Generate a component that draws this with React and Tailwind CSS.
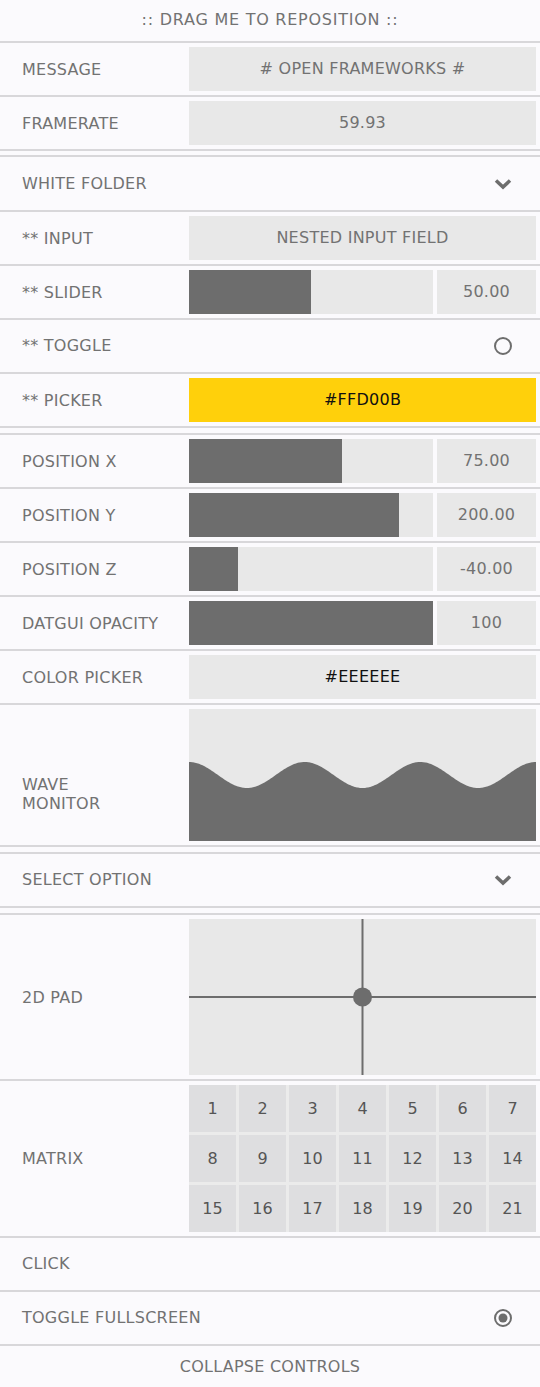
import React from "react";

const FONT = { fontFamily: '"DejaVu Sans", Verdana, sans-serif' };

const Row = ({ label, children, tall, labelClass = "" }) => (
  <div className="flex items-center border-b-2 border-[#d8d7da] py-1 pr-1">
    <div
      className={`w-[189px] shrink-0 pl-[22px] text-[16px] leading-[19px] tracking-[0.25px] text-[#727272] ${labelClass}`}
    >
      {label}
    </div>
    <div className={`flex-1 ${tall ? "" : "h-[44px]"} flex`}>{children}</div>
  </div>
);

const Box = ({ children, className = "" }) => (
  <div
    className={`flex-1 h-full flex items-center justify-center bg-[#e8e8e8] text-[16px] tracking-[0.25px] text-[#727272] ${className}`}
  >
    {children}
  </div>
);

const Slider = ({ fill, value }) => (
  <div className="flex flex-1 h-full gap-1">
    <div className="w-[244px] h-full bg-[#e8e8e8] flex">
      <div className="h-full bg-[#6d6d6d]" style={{ width: fill }} />
    </div>
    <Box>{value}</Box>
  </div>
);

const Spacer = ({ h = "h-[7px]" }) => (
  <div className={`${h} border-b-2 border-[#d8d7da]`} />
);

const Chevron = () => (
  <svg width="18" height="12" viewBox="0 0 18 12" className="mr-[28px]">
    <path d="M2 2.5 L9 9 L16 2.5" fill="none" stroke="#6d6d6d" strokeWidth="3.5" />
  </svg>
);

const Radio = ({ on }) => (
  <svg width="20" height="20" viewBox="0 0 20 20" className="mr-[27px]">
    <circle cx="10" cy="10" r="8" fill="none" stroke="#6d6d6d" strokeWidth="2" />
    {on && <circle cx="10" cy="10" r="4.5" fill="#6d6d6d" />}
  </svg>
);

const LineRow = ({ label, right }) => (
  <div className="flex h-[54px] items-center justify-between border-b-2 border-[#d8d7da] pl-[22px]">
    <span className="text-[16px] tracking-[0.25px] text-[#727272]">{label}</span>
    {right}
  </div>
);

const Wave = () => {
  const w = 347;
  const h = 132;
  let d = `M0 ${h} `;
  for (let x = 0; x <= w; x += 1) {
    const y = 66 - 13 * Math.cos((2 * Math.PI * x) / 115.67);
    d += `L${x} ${y.toFixed(2)} `;
  }
  d += `L${w} ${h} Z`;
  return (
    <svg width={w} height={h} viewBox={`0 0 ${w} ${h}`} className="block">
      <rect width={w} height={h} fill="#e8e8e8" />
      <path d={d} fill="#6d6d6d" />
    </svg>
  );
};

const Pad = () => (
  <svg width="347" height="156" viewBox="0 0 347 156" className="block">
    <rect width="347" height="156" fill="#e8e8e8" />
    <rect x="172.5" y="0" width="2" height="156" fill="#6d6d6d" />
    <rect x="0" y="77" width="347" height="2" fill="#6d6d6d" />
    <circle cx="173.5" cy="78" r="9.5" fill="#6d6d6d" />
  </svg>
);

export default function App() {
  const cells = Array.from({ length: 21 }, (_, i) => i + 1);
  return (
    <div className="w-[540px] bg-[#fbfafd] select-none" style={FONT}>
      <div className="h-[43px] flex items-center justify-center border-b-2 border-[#d8d7da] text-[16px] tracking-[0.75px] text-[#727272] pb-[2px]">
        :: DRAG ME TO REPOSITION ::
      </div>

      <Row label="MESSAGE">
        <Box># OPEN FRAMEWORKS #</Box>
      </Row>
      <Row label="FRAMERATE">
        <Box>59.93</Box>
      </Row>
      <Spacer h="h-[6px]" />

      <div className="flex h-[55px] items-center justify-between border-b-2 border-[#d8d7da] pl-[22px]">
        <span className="text-[16px] tracking-[0.25px] text-[#727272]">WHITE FOLDER</span>
        <Chevron />
      </div>
      <Row label="** INPUT">
        <Box>NESTED INPUT FIELD</Box>
      </Row>
      <Row label="** SLIDER">
        <Slider fill={122} value="50.00" />
      </Row>
      <LineRow label="** TOGGLE" right={<Radio />} />
      <Row label="** PICKER">
        <Box className="!bg-[#ffd00b] !text-[#111111]">#FFD00B</Box>
      </Row>
      <Spacer />

      <Row label="POSITION X">
        <Slider fill={153} value="75.00" />
      </Row>
      <Row label="POSITION Y">
        <Slider fill={210} value="200.00" />
      </Row>
      <Row label="POSITION Z">
        <Slider fill={49} value="-40.00" />
      </Row>
      <Row label="DATGUI OPACITY">
        <Slider fill={244} value="100" />
      </Row>
      <Row label="COLOR PICKER">
        <Box className="!text-[#111111]">#EEEEEE</Box>
      </Row>
      <Row label={<>WAVE<br />MONITOR</>} tall labelClass="pt-[38px]">
        <Wave />
      </Row>
      <Spacer />

      <div className="flex h-[54px] items-center justify-between border-b-2 border-[#d8d7da] pl-[22px]">
        <span className="text-[16px] tracking-[0.25px] text-[#727272]">SELECT OPTION</span>
        <Chevron />
      </div>
      <Spacer />

      <Row label="2D PAD" tall>
        <Pad />
      </Row>
      <Row label="MATRIX" tall>
        <div className="grid grid-cols-[repeat(7,47px)] gap-[3px] bg-[#ebebeb]">
          {cells.map((n) => (
            <div
              key={n}
              className="h-[47px] flex items-center justify-center bg-[#dedee0] text-[16px] text-[#555555]"
            >
              {n}
            </div>
          ))}
        </div>
      </Row>
      <LineRow label="CLICK" />
      <LineRow label="TOGGLE FULLSCREEN" right={<Radio on />} />
      <div className="h-[41px] flex items-center justify-center text-[16px] tracking-[0.25px] text-[#727272]">
        COLLAPSE CONTROLS
      </div>
    </div>
  );
}
